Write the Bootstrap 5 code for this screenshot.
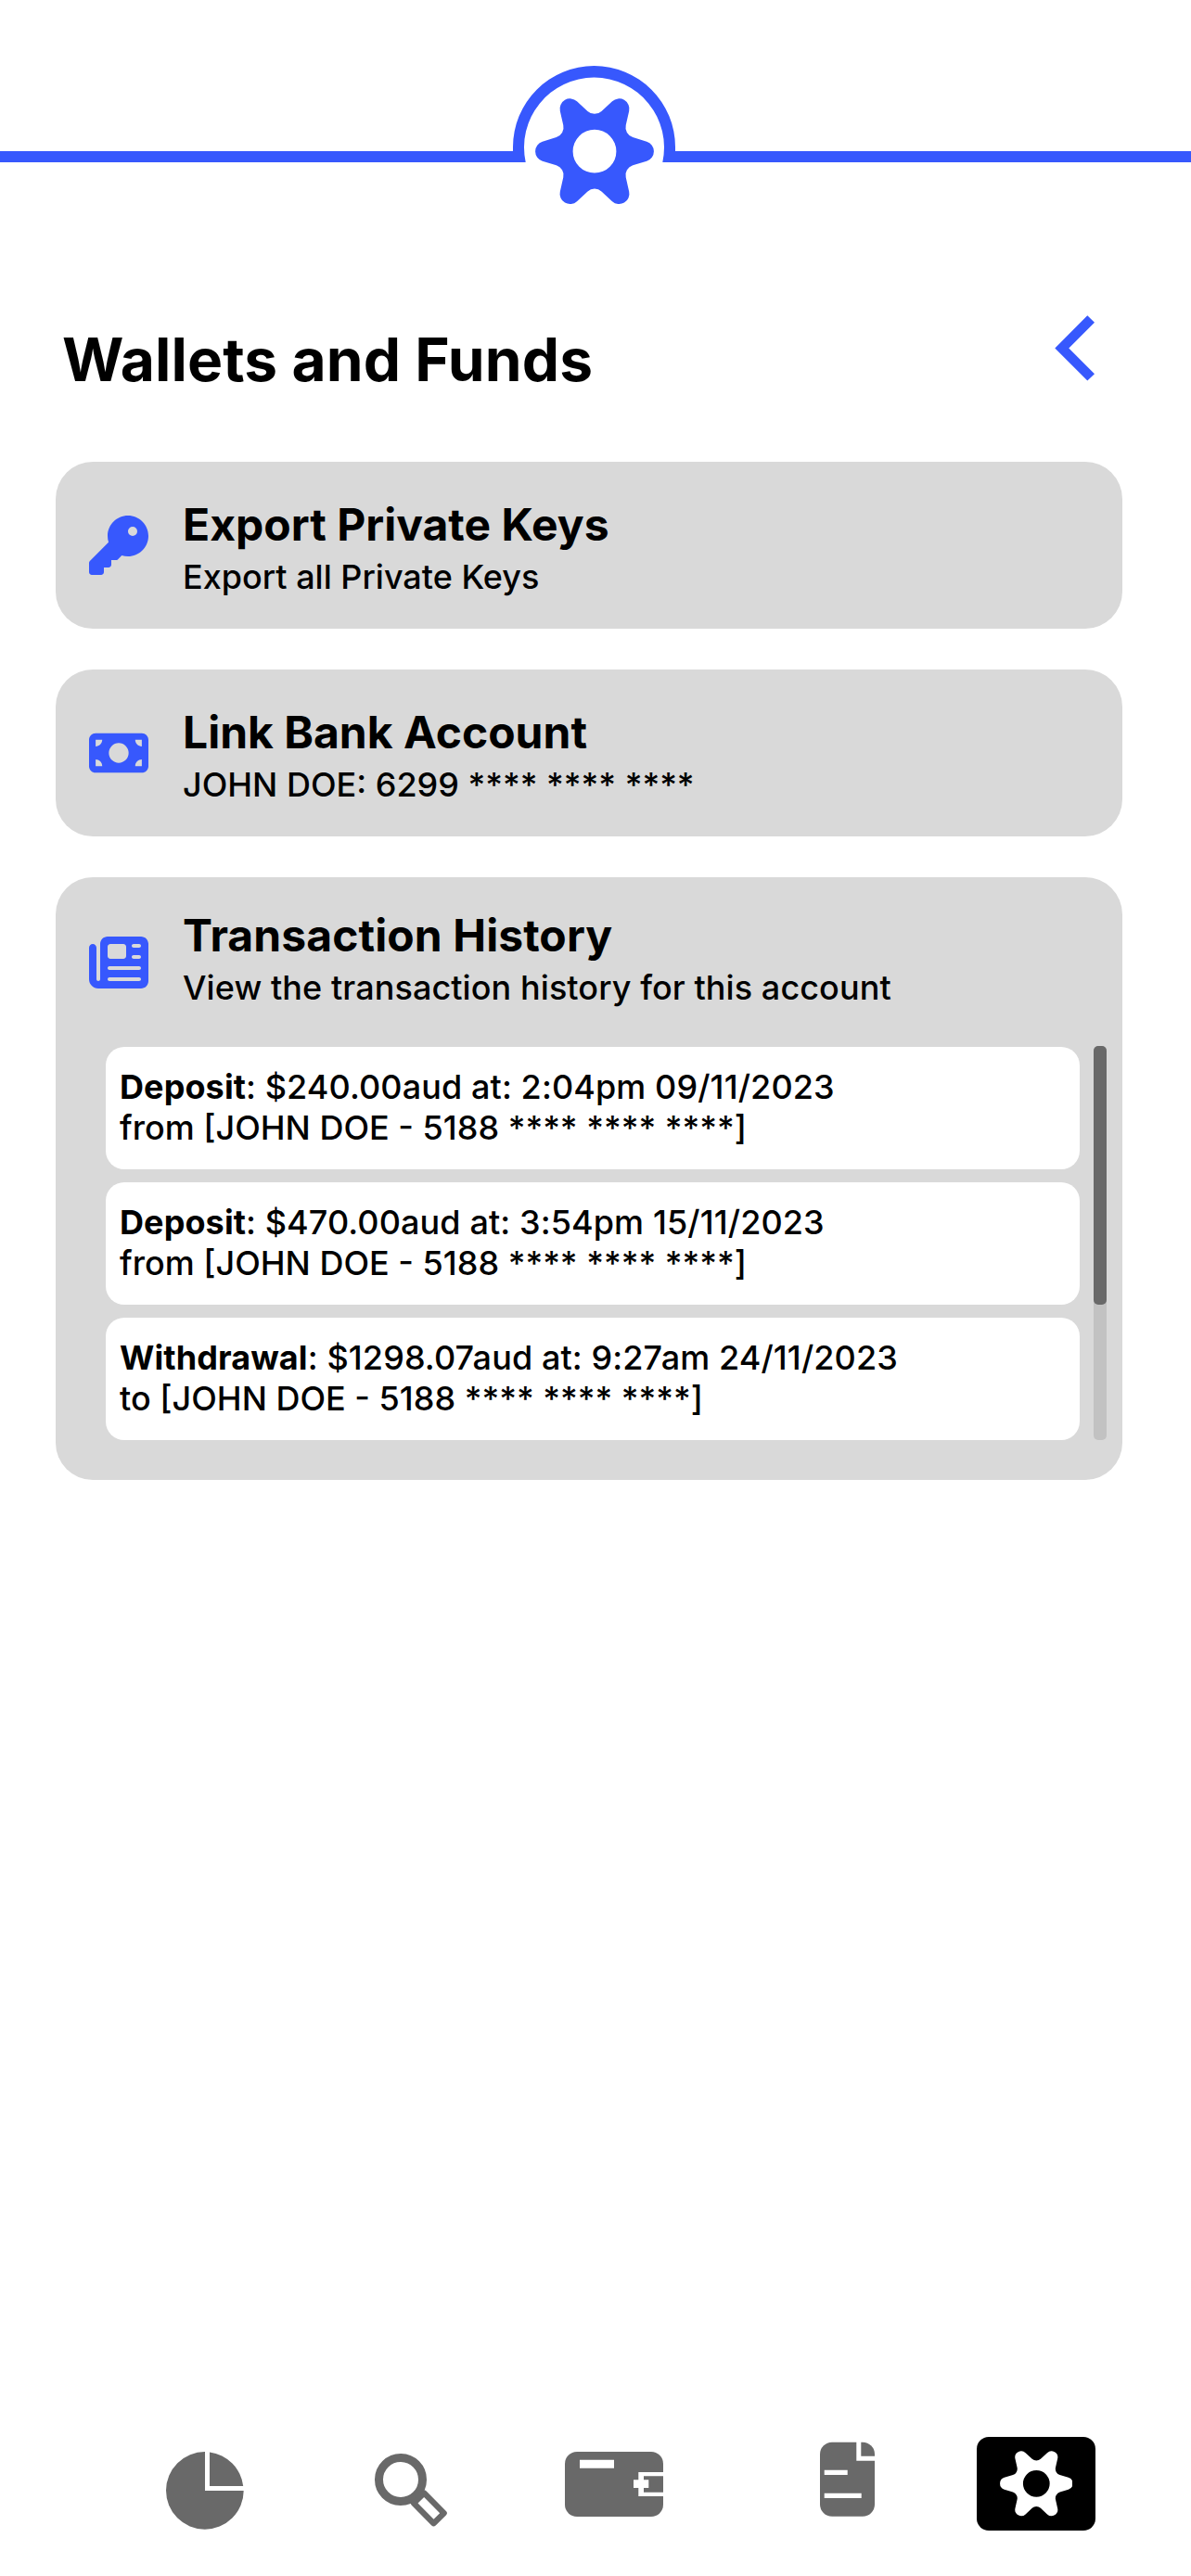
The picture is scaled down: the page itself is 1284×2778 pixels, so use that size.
<!DOCTYPE html>
<html lang="en">
<head>
<meta charset="utf-8">
<meta name="viewport" content="width=device-width, initial-scale=1">
<title>Wallets and Funds</title>
<link href="https://cdn.jsdelivr.net/npm/bootstrap@5.3.0/dist/css/bootstrap.min.css" rel="stylesheet">
<style>
:root{--brand:#3758fd;--panel:#d9d9d9;--ink:#696969}
body{font-family:Inter,"Liberation Sans",sans-serif;color:#000;background:#fff}
svg{display:block;flex:none}
.top-mark{height:235px;color:var(--brand)}
.page-head{padding:93px 102px 0 67px;height:263px}
.page-head h1{font-size:64px;font-weight:700;line-height:78px;margin-top:21px;letter-spacing:.1px}
.back-btn{color:var(--brand);margin-top:11px}
.stack{padding:0 74px 0 60px;gap:44px}
.panel{background:var(--panel);border-radius:40px}
.panel-row{height:180px;padding:39px 36px 0;gap:37px}
.panel-row svg{color:var(--brand);width:64px;height:64px;margin-top:19px}
.panel-tall{height:650px}
.panel-tall .panel-row{height:182px;padding-top:34px}
.panel-tall .panel-row svg{margin-top:26px}
.panel-tall .row-title,.panel-tall .row-text{letter-spacing:.08px}
.row-title{font-size:48px;font-weight:700;line-height:58px;margin:0 0 5px}
.row-text{font-size:36px;font-weight:500;line-height:44px;margin:0}
.history{padding:0 17px 0 54px;gap:15px}
.entries{gap:14px;padding-top:1px}
.entry{height:132px;border-radius:20px;padding:21px 15px;font-size:36px;font-weight:500;line-height:44px}
.entry-main{letter-spacing:.1px}
.entry b{font-weight:700}
.track{width:14px;height:425px;border-radius:5px;background:#c2c2c2}
.thumb{height:279px;border-radius:5px;background:var(--ink)}
.tabs{padding:0 103px 49px 179px;color:var(--ink)}
.tab-search{margin-left:141px}
.tab-wallet{margin-left:125px}
.tab-docs{margin-left:169px}
.tab-active{width:128px;height:101px;border-radius:13px}
</style>
<script src="https://cdn.jsdelivr.net/npm/bootstrap@5.3.0/dist/js/bootstrap.bundle.min.js"></script>
</head>
<body class="d-flex flex-column min-vh-100">

<svg width="0" height="0" class="position-absolute" aria-hidden="true">
  <symbol id="gear" viewBox="-64 -64 128 128">
    <path fill="currentColor" fill-rule="evenodd" d="M41.2-15.16L56.23-10.49A11 11 0 0 1 56.23 10.49L41.2 15.16A11 11 0 0 0 33.73 28.1L37.2 43.45A11 11 0 0 1 19.03 53.94L7.47 43.26A11 11 0 0 0-7.47 43.26L-19.03 53.94A11 11 0 0 1-37.2 43.45L-33.73 28.1A11 11 0 0 0-41.2 15.16L-56.23 10.49A11 11 0 0 1-56.23-10.49L-41.2-15.16A11 11 0 0 0-33.73-28.1L-37.2-43.45A11 11 0 0 1-19.03-53.94L-7.47-43.26A11 11 0 0 0 7.47-43.26L19.03-53.94A11 11 0 0 1 37.2-43.45L33.73-28.1A11 11 0 0 0 41.2-15.16ZM0-23.4A23.4 23.4 0 1 1 0 23.4 23.4 23.4 0 1 1 0-23.4Z"/>
  </symbol>
</svg>

<header class="top-mark">
  <svg width="1284" height="235" viewBox="0 0 1284 235">
    <path fill="currentColor" d="M0 163H553V158.5A87.500 87.500 0 0 1 728 158.500V163H1284V175H714.300A75.500 75.500 0 1 0 566.700 175H0Z"/>
    <use href="#gear" x="577" y="99.200" width="128" height="128"/>
  </svg>
</header>

<div class="page-head d-flex justify-content-between align-items-start">
  <h1>Wallets and Funds</h1>
  <a href="#" class="back-btn" aria-label="Back">
    <svg width="45" height="73" viewBox="0 0 45 73"><path fill="currentColor" d="M.3 36.500L35.300 1.200 43 8.700 15.300 36.500 43 64.200 35.300 71.500Z"/></svg>
  </a>
</div>

<main class="stack d-flex flex-column">
  <section class="panel panel-row d-flex align-items-start">
    <svg viewBox="0 0 512 512" fill="currentColor"><path d="M336 352c97.200 0 176-78.800 176-176S433.200 0 336 0S160 78.800 160 176c0 18.700 2.900 36.800 8.300 53.700L7 391c-4.500 4.500-7 10.600-7 17v80c0 13.300 10.700 24 24 24h80c13.300 0 24-10.700 24-24V448h40c13.300 0 24-10.700 24-24V384h40c6.400 0 12.500-2.500 17-7l33.300-33.300c16.900 5.400 35 8.300 53.700 8.300zM376 96a40 40 0 1 1 0 80 40 40 0 1 1 0-80z"/></svg>
    <div><h2 class="row-title">Export Private Keys</h2><p class="row-text">Export all Private Keys</p></div>
  </section>

  <section class="panel panel-row d-flex align-items-start">
    <svg viewBox="0 -32 576 576" fill="currentColor"><path d="M64 64C28.700 64 0 92.700 0 128V384c0 35.300 28.700 64 64 64H512c35.300 0 64-28.700 64-64V128c0-35.300-28.700-64-64-64H64zm64 320H64V320c35.300 0 64 28.700 64 64zM64 192V128h64c0 35.300-28.700 64-64 64zM448 384c0-35.300 28.700-64 64-64v64H448zm64-192c-35.300 0-64-28.700-64-64h64v64zM288 160a96 96 0 1 1 0 192 96 96 0 1 1 0-192z"/></svg>
    <div><h2 class="row-title">Link Bank Account</h2><p class="row-text">JOHN DOE: 6299 **** **** ****</p></div>
  </section>

  <section class="panel panel-tall">
    <div class="panel-row d-flex align-items-start">
      <svg viewBox="0 0 512 512" fill="currentColor"><path d="M96 96c0-35.300 28.700-64 64-64H448c35.300 0 64 28.700 64 64V416c0 35.300-28.700 64-64 64H80c-44.200 0-80-35.800-80-80V128c0-17.700 14.300-32 32-32s32 14.300 32 32V400c0 8.800 7.200 16 16 16s16-7.200 16-16V96zm64 24v80c0 13.300 10.700 24 24 24H296c13.300 0 24-10.700 24-24V120c0-13.300-10.700-24-24-24H184c-13.300 0-24 10.700-24 24zm208-8c0 8.800 7.200 16 16 16h48c8.800 0 16-7.200 16-16s-7.200-16-16-16H384c-8.800 0-16 7.200-16 16zm0 96c0 8.800 7.200 16 16 16h48c8.800 0 16-7.200 16-16s-7.200-16-16-16H384c-8.800 0-16 7.200-16 16zM160 304c0 8.800 7.200 16 16 16H432c8.800 0 16-7.200 16-16s-7.200-16-16-16H176c-8.800 0-16 7.200-16 16zm0 96c0 8.800 7.200 16 16 16H432c8.800 0 16-7.200 16-16s-7.200-16-16-16H176c-8.800 0-16 7.200-16 16z"/></svg>
      <div><h2 class="row-title">Transaction History</h2><p class="row-text">View the transaction history for this account</p></div>
    </div>
    <div class="history d-flex align-items-start">
      <div class="entries d-flex flex-column flex-grow-1">
        <div class="entry bg-white"><div class="entry-main"><b>Deposit</b>: $240.00aud at: 2:04pm 09/11/2023</div><div>from [JOHN DOE - 5188 **** **** ****]</div></div>
        <div class="entry bg-white"><div class="entry-main"><b>Deposit</b>: $470.00aud at: 3:54pm 15/11/2023</div><div>from [JOHN DOE - 5188 **** **** ****]</div></div>
        <div class="entry bg-white"><div class="entry-main"><b>Withdrawal</b>: $1298.07aud at: 9:27am 24/11/2023</div><div>to [JOHN DOE - 5188 **** **** ****]</div></div>
      </div>
      <div class="track"><div class="thumb"></div></div>
    </div>
  </section>
</main>

<nav class="tabs d-flex mt-auto">
  <!-- portfolio -->
  <svg width="84" height="101" viewBox="0 0 84 101" fill="currentColor"><path d="M42 16V58H83.700A41.850 41.850 0 1 1 42 16ZM47 16.400A41.850 41.850 0 0 1 83.200 53H47Z"/></svg>
  <!-- search -->
  <svg class="tab-search" width="80" height="101" viewBox="0 0 80 101" fill="none" stroke="currentColor"><g transform="translate(28 46) rotate(45.500)"><circle r="23.500" stroke-width="9"/><path d="M28-7.800H58.600V7.800H28Z" stroke-width="6.300" stroke-linejoin="round"/></g></svg>
  <!-- wallet -->
  <svg class="tab-wallet" width="106" height="101" viewBox="0 0 106 101" fill="currentColor"><rect y="16" width="106" height="70" rx="13"/><path fill="#fff" d="M16 24.700H53V33.700H16ZM79.300 38H106V42.300H85V46.300H90.300V55H85V59.700H106V64H79.300V55H74V46.300H79.300Z"/></svg>
  <!-- documents -->
  <svg class="tab-docs" width="59" height="101" viewBox="0 0 59 101" fill="currentColor"><rect y="5.800" width="59" height="80" rx="13"/><path fill="#fff" d="M39.300 5H44.300V20.700H59V25.700H39.300ZM4.700 35.700H29.700V41H4.700ZM4.700 60.700H44.700V66H4.700Z"/></svg>
  <!-- settings -->
  <a href="#" class="tab-active ms-auto bg-black text-white d-flex align-items-center justify-content-center" aria-label="Settings"><svg width="78.600" height="78.600"><use href="#gear"/></svg></a>
</nav>
</body>
</html>
